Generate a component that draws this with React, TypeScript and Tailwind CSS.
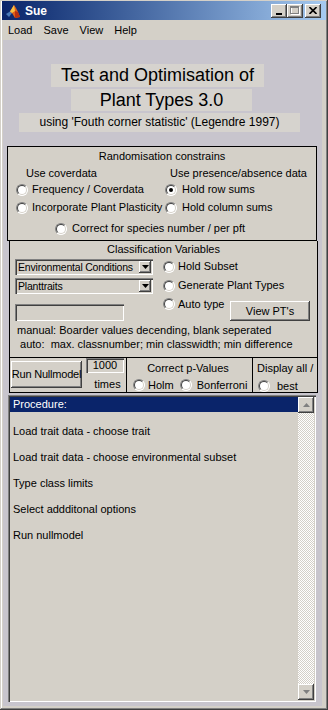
import React from "react";

const raised =
  "shadow-[inset_-1px_-1px_0_#404040,inset_1px_1px_0_#ffffff,inset_-2px_-2px_0_#808080,inset_2px_2px_0_#d4d0c8]";
const sunken =
  "shadow-[inset_1px_1px_0_#808080,inset_2px_2px_0_#404040,inset_-1px_-1px_0_#ffffff,inset_-2px_-2px_0_#d4d0c8]";

function Radio({ checked = false }: { checked?: boolean }) {
  return (
    <span className="relative inline-block w-[12px] h-[12px] shrink-0 rounded-full bg-white border border-t-[#808080] border-l-[#808080] border-b-white border-r-white">
      <span className="absolute inset-0 rounded-full border border-t-[#404040] border-l-[#404040] border-b-[#d4d0c8] border-r-[#d4d0c8]" />
      {checked && (
        <span className="absolute left-[3px] top-[3px] w-[4px] h-[4px] rounded-full bg-black" />
      )}
    </span>
  );
}

function RadioLabel({
  label,
  checked,
  gap = "gap-[4px]",
}: {
  label: string;
  checked?: boolean;
  gap?: string;
}) {
  return (
    <span className={`flex items-center whitespace-nowrap ${gap}`}>
      <Radio checked={checked} />
      <span>{label}</span>
    </span>
  );
}

function Arrow({ down = true, color = "#000000" }: { down?: boolean; color?: string }) {
  return (
    <svg width="7" height="4" viewBox="0 0 7 4">
      <path d={down ? "M0 0 H7 L3.5 4 Z" : "M0 4 H7 L3.5 0 Z"} fill={color} />
    </svg>
  );
}

function Dropdown({ label }: { label: string }) {
  return (
    <div className={`h-[16px] flex items-center bg-[#d4d0c8] pl-[3px] pr-[2px] ${sunken}`}>
      <span className="flex-1 leading-[16px] text-[10.5px] tracking-[-0.2px] whitespace-nowrap overflow-hidden">
        {label}
      </span>
      <span className={`w-[12px] h-[12px] shrink-0 flex items-center justify-center bg-[#d4d0c8] ${raised}`}>
        <Arrow />
      </span>
    </div>
  );
}

function MatlabIcon() {
  return (
    <svg width="16" height="16" viewBox="0 0 16 16">
      <path d="M1 11 L5 8.5 L7 10 L4 14 Z" fill="#4a7ab8" />
      <path d="M5 8.5 L9 2 L11 5 L13 9 L15 14 L10 15 L7 10 Z" fill="#e0601a" />
      <path d="M9 2 L10 8 L7 10 L5 8.5 Z" fill="#f6c044" />
      <path d="M10 8 L13 9 L15 14 L10 15 Z" fill="#b83010" />
    </svg>
  );
}

function TitleBar() {
  return (
    <div className="h-[19px] flex items-center bg-linear-to-r from-[#0a246a] to-[#a6caf0] pl-[3px] pr-[5px]">
      <MatlabIcon />
      <span className="ml-[4px] text-white font-bold text-[12px]">Sue</span>
      <div className="ml-auto flex items-center">
        <span className={`w-[16px] h-[14px] bg-[#d4d0c8] flex items-end justify-center pb-[3px] ${raised}`}>
          <span className="w-[6px] h-[2px] bg-black" />
        </span>
        <span className={`w-[16px] h-[14px] bg-[#d4d0c8] flex items-center justify-center ${raised}`}>
          <svg width="10" height="9" viewBox="0 0 10 9">
            <rect x="1.5" y="1.5" width="8" height="7" fill="none" stroke="#ffffff" />
            <rect x="0.5" y="0.5" width="8" height="7" fill="none" stroke="#808080" />
            <rect x="0.5" y="1" width="8" height="1" fill="#808080" />
          </svg>
        </span>
        <span className={`ml-[2px] w-[16px] h-[14px] bg-[#d4d0c8] flex items-center justify-center ${raised}`}>
          <svg width="8" height="7" viewBox="0 0 8 7">
            <path d="M0.5 0 L7.5 7 M7.5 0 L0.5 7" stroke="#000000" strokeWidth="1.6" />
          </svg>
        </span>
      </div>
    </div>
  );
}

function MenuBar() {
  return (
    <div className="h-[20px] flex items-center gap-[11px] pl-[6px] text-[11px]">
      <span>Load</span>
      <span>Save</span>
      <span>View</span>
      <span>Help</span>
    </div>
  );
}

const steps = [
  "Load trait data - choose trait",
  "Load trait data - choose environmental subset",
  "Type class limits",
  "Select addditonal options",
  "Run nullmodel",
];

export default function App() {
  return (
    <div className="w-[328px] h-[710px] bg-[#d4d0c8] flex flex-col pt-[1px] px-[2px] pb-[4px] font-['Liberation_Sans',Arial,sans-serif] text-[11px] text-black overflow-hidden shadow-[inset_-1px_-1px_0_#404040,inset_1px_1px_0_#d4d0c8,inset_-2px_-2px_0_#808080,inset_2px_2px_0_#ffffff]">
      <TitleBar />
      <MenuBar />

      <div className="flex-1 ml-[1px] mr-[4px] bg-[#c8c5cd] flex flex-col">
        {/* header labels */}
        <div className="ml-[48px] mt-[24px] w-[213px] h-[23px] bg-[#d6d3ce] text-[18px] leading-[23px] text-center whitespace-nowrap">
          Test and Optimisation of
        </div>
        <div className="ml-[68px] mt-[2px] w-[181px] h-[22px] bg-[#d6d3ce] text-[18px] leading-[22px] text-center whitespace-nowrap">
          Plant Types 3.0
        </div>
        <div className="ml-[16px] mt-[2px] w-[281px] h-[19px] bg-[#d6d3ce] text-[12px] leading-[19px] text-center whitespace-nowrap">
          using 'Fouth corner statistic' (Legendre 1997)
        </div>

        {/* Randomisation constrains */}
        <div className="ml-[4px] mt-[14px] w-[310px] h-[95px] border border-black bg-[#d4d0c8] flex flex-col">
          <div className="h-[18px] leading-[18px] text-center">Randomisation constrains</div>
          <div className="h-[16px] flex items-center pl-[18px]">
            <span className="w-[144px]">Use coverdata</span>
            <span>Use presence/absence data</span>
          </div>
          <div className="h-[17px] flex items-center pl-[8px]">
            <div className="w-[149px]">
              <RadioLabel label="Frequency / Coverdata" />
            </div>
            <RadioLabel label="Hold row sums" checked gap="gap-[5px]" />
          </div>
          <div className="h-[19px] flex items-center pl-[8px]">
            <div className="w-[149px]">
              <RadioLabel label="Incorporate Plant Plasticity" />
            </div>
            <RadioLabel label="Hold column sums" gap="gap-[5px]" />
          </div>
          <div className="h-[23px] flex items-center pl-[47px]">
            <RadioLabel label="Correct for species number / per pft" gap="gap-[5px]" />
          </div>
        </div>

        {/* Classification Variables */}
        <div className="ml-[6px] w-[309px] h-[117px] border border-t-0 border-black bg-[#d4d0c8] flex flex-col">
          <div className="h-[16px] leading-[16px] text-center">Classification Variables</div>
          <div className="flex">
            <div className="ml-[5px] w-[138px] flex flex-col">
              <div className="mt-[2px]">
                <Dropdown label="Environmental Conditions" />
              </div>
              <div className="mt-[3px]">
                <Dropdown label="Planttraits" />
              </div>
              <div className={`mt-[10px] w-[109px] h-[17px] bg-[#d4d0c8] ${sunken}`} />
            </div>
            <div className="ml-[10px] flex-1 pr-[7px] flex flex-col">
              <div className="h-[19px] flex items-center">
                <RadioLabel label="Hold Subset" gap="gap-[3px]" />
              </div>
              <div className="h-[19px] flex items-center">
                <RadioLabel label="Generate Plant Types" gap="gap-[3px]" />
              </div>
              <div className="flex items-start">
                <div className="h-[18px] flex items-center">
                  <RadioLabel label="Auto type" gap="gap-[3px]" />
                </div>
                <button
                  className={`ml-auto mt-[6px] w-[80px] h-[20px] bg-[#d4d0c8] text-[11px] leading-[20px] text-center ${raised}`}
                >
                  View PT's
                </button>
              </div>
            </div>
          </div>
          <div className="mt-[2px] pl-[7px] leading-[14px] whitespace-pre">
            manual: Boarder values decending, blank seperated
          </div>
          <div className="pl-[7px] leading-[14px] whitespace-pre"> auto:  max. classnumber; min classwidth; min difference</div>
        </div>

        {/* run / p-values / display row */}
        <div className="ml-[6px] w-[309px] h-[35px] flex bg-[#d4d0c8]">
          <div className="w-[118px] border-l border-r border-b border-black flex">
            <button
              className={`ml-[1px] mt-[3px] w-[71px] h-[27px] bg-[#d4d0c8] text-[11px] tracking-[-0.2px] whitespace-nowrap text-center ${raised}`}
            >
              Run Nullmodel
            </button>
            <div className="ml-[4px] flex flex-col">
              <div className={`w-[38px] h-[15px] leading-[15px] text-center bg-[#d4d0c8] ${sunken}`}>1000</div>
              <div className="mt-[4px] leading-[14px] text-center pl-[5px]">times</div>
            </div>
          </div>
          <div className="w-[126px] border-r border-b border-black flex flex-col">
            <div className="leading-[20px] text-center pr-[3px]">Correct p-Values</div>
            <div className="h-[14px] flex items-center pl-[6px]">
              <RadioLabel label="Holm" gap="gap-[3px]" />
              <span className="ml-[6px]">
                <RadioLabel label="Bonferroni" gap="gap-[5px]" />
              </span>
            </div>
          </div>
          <div className="w-[65px] border-r border-b border-black flex flex-col">
            <div className="leading-[20px] pl-[4px] whitespace-nowrap">Display all /</div>
            <div className="mt-[1px] h-[14px] flex items-center pl-[5px]">
              <RadioLabel label="best" gap="gap-[7px]" />
            </div>
          </div>
        </div>

        {/* procedure list */}
        <div className={`ml-[5px] mt-[2px] mb-[4px] w-[308px] flex-1 flex p-[2px] bg-[#d4d0c8] ${sunken}`}>
          <div className="flex-1 flex flex-col">
            <div className="h-[15px] leading-[15px] bg-[#0a246a] text-white pl-[3px]">Procedure:</div>
            {steps.map((s) => (
              <div key={s} className="mt-[13px] h-[13px] leading-[13px] pl-[3px] whitespace-nowrap">
                {s}
              </div>
            ))}
          </div>
          <div className="w-[16px] flex flex-col bg-[repeating-conic-gradient(#d4d0c8_0_25%,#ffffff_0_50%)] bg-[length:2px_2px]">
            <div className={`w-[16px] h-[16px] bg-[#d4d0c8] flex items-center justify-center ${raised}`}>
              <Arrow down={false} color="#808080" />
            </div>
            <div className="flex-1" />
            <div className={`w-[16px] h-[16px] bg-[#d4d0c8] flex items-center justify-center ${raised}`}>
              <Arrow color="#808080" />
            </div>
          </div>
        </div>
      </div>
    </div>
  );
}
